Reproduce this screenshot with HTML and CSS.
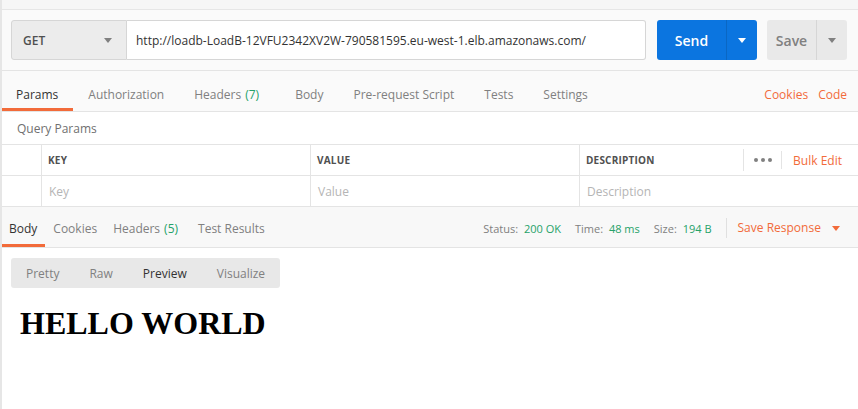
FILE: index.html
```html
<!DOCTYPE html>
<html lang="en">
<head>
    <meta charset="UTF-8">
    <title>Request</title>
    <link rel="stylesheet" href="styles.css">
</head>
<body>
    <div class="app">
        <div class="top-strip"></div>

        <div class="url-row">
            <div class="method">
                <span>GET</span>
                <span class="caret"></span>
            </div>
            <div class="url">http://loadb-LoadB-12VFU2342XV2W-790581595.eu-west-1.elb.amazonaws.com/</div>
            <div class="send">
                <span class="send-label">Send</span>
                <span class="send-drop"><span class="caret white"></span></span>
            </div>
            <div class="save">
                <span class="save-label">Save</span>
                <span class="save-drop"><span class="caret"></span></span>
            </div>
        </div>

        <div class="req-tabs">
            <div class="tab active">Params</div>
            <div class="tab">Authorization</div>
            <div class="tab">Headers <span class="count">(7)</span></div>
            <div class="tab">Body</div>
            <div class="tab">Pre-request Script</div>
            <div class="tab">Tests</div>
            <div class="tab">Settings</div>
            <div class="tab-links">
                <span>Cookies</span>
                <span>Code</span>
            </div>
        </div>

        <div class="query-title">Query Params</div>

        <div class="params">
            <div class="row head">
                <div class="cell check"></div>
                <div class="cell key">KEY</div>
                <div class="cell value">VALUE</div>
                <div class="cell desc">
                    <span>DESCRIPTION</span>
                    <div class="desc-tools">
                        <span class="dots"><i></i><i></i><i></i></span>
                        <span class="bulk">Bulk Edit</span>
                    </div>
                </div>
            </div>
            <div class="row">
                <div class="cell check"></div>
                <div class="cell key placeholder">Key</div>
                <div class="cell value placeholder">Value</div>
                <div class="cell desc placeholder">Description</div>
            </div>
        </div>

        <div class="resp-bar">
            <div class="rtab active">Body</div>
            <div class="rtab">Cookies</div>
            <div class="rtab">Headers <span class="count">(5)</span></div>
            <div class="rtab">Test Results</div>
            <div class="resp-meta">
                <span class="meta">Status: <b>200 OK</b></span>
                <span class="meta">Time: <b>48 ms</b></span>
                <span class="meta">Size: <b>194 B</b></span>
                <span class="save-resp">Save Response <span class="caret orange"></span></span>
            </div>
        </div>

        <div class="resp-body">
            <div class="modes">
                <span>Pretty</span>
                <span>Raw</span>
                <span class="on">Preview</span>
                <span>Visualize</span>
            </div>
            <h1 class="preview">HELLO WORLD</h1>
        </div>
    </div>
</body>
</html>
```

FILE: styles.css
```css
body {
    margin: 0;
    font-family: 'Open Sans', 'Noto Sans', sans-serif;
    background: #fff;
    color: #333;
}
.app {
    border-left: 2px solid #e6e6e6;
    height: 409px;
    box-sizing: border-box;
}
.top-strip {
    height: 9px;
    background: #f6f6f6;
    border-bottom: 1px solid #e6e6e6;
}
.url-row {
    display: flex;
    align-items: center;
    height: 60px;
    padding: 0 11px 0 9px;
    background: #fafafa;
    border-bottom: 1px solid #e4e4e4;
}
.method {
    width: 116px;
    height: 40px;
    box-sizing: border-box;
    display: flex;
    align-items: center;
    justify-content: space-between;
    padding: 0 14px 0 11px;
    background: #ececec;
    border: 1px solid #d6d6d6;
    border-radius: 3px 0 0 3px;
    font-size: 12px;
    font-weight: 600;
    color: #505050;
}
.caret {
    display: inline-block;
    width: 0;
    height: 0;
    border-left: 4px solid transparent;
    border-right: 4px solid transparent;
    border-top: 5px solid #808080;
}
.caret.white { border-top-color: #fff; }
.caret.orange { border-top-color: #f26b3a; margin-left: 8px; vertical-align: middle; }
.url {
    width: 519px;
    height: 40px;
    box-sizing: border-box;
    display: flex;
    align-items: center;
    padding-left: 9px;
    background: #fff;
    border: 1px solid #d6d6d6;
    border-left: none;
    border-radius: 0 3px 3px 0;
    font-size: 12px;
    color: #333;
    white-space: nowrap;
}
.send {
    margin-left: 11px;
    width: 100px;
    height: 40px;
    display: flex;
    background: #0b75e0;
    border-radius: 3px;
    color: #fff;
}
.send-label {
    width: 69px;
    display: flex;
    align-items: center;
    justify-content: center;
    font-size: 14px;
    font-weight: 600;
    border-right: 1px solid #0a67c4;
}
.send-drop, .save-drop {
    flex: 1;
    display: flex;
    align-items: center;
    justify-content: center;
}
.save {
    margin-left: 10px;
    width: 80px;
    height: 40px;
    display: flex;
    background: #e9e9e9;
    border-radius: 3px;
    color: #808080;
}
.save-label {
    width: 49px;
    display: flex;
    align-items: center;
    justify-content: center;
    font-size: 14px;
    font-weight: 600;
    border-right: 1px solid #d6d6d6;
}
.req-tabs {
    display: flex;
    height: 40px;
    background: #fafafa;
    border-bottom: 1px solid #e4e4e4;
    font-size: 12px;
}
.tab {
    display: flex;
    align-items: center;
    padding: 9px 15px 0;
    color: #808080;
    border-bottom: 3px solid transparent;
}
.tab:first-child { padding-left: 14px; }
.tab.active {
    color: #333;
    border-bottom-color: #f26b3a;
}
.count { color: #26a269; margin-left: 4px; margin-right: 4px; }
.tab .count { margin-right: 6px; }
.tab-links {
    margin-left: auto;
    display: flex;
    align-items: center;
    gap: 10px;
    padding: 6px 11px 0 0;
    color: #f26b3a;
}
.query-title {
    height: 32px;
    display: flex;
    align-items: center;
    padding-left: 15px;
    font-size: 12px;
    color: #707070;
    border-bottom: 1px solid #e4e4e4;
}
.row {
    display: flex;
    height: 31px;
    border-bottom: 1px solid #e4e4e4;
    box-sizing: border-box;
}
.cell {
    display: flex;
    align-items: center;
    padding-left: 6px;
    border-right: 1px solid #e4e4e4;
    box-sizing: border-box;
    font-size: 12px;
}
.cell.check { width: 40px; padding: 0; }
.cell.key { width: 269px; }
.cell.value { width: 269px; }
.cell.desc { flex: 1; border-right: none; }
.head .cell {
    font-size: 10px;
    font-weight: 700;
    color: #505050;
    letter-spacing: 0.2px;
}
.placeholder { color: #b5b5b5; padding-left: 7px; }
.desc-tools {
    margin-left: auto;
    display: flex;
    align-items: center;
    height: 22px;
    border-left: 1px solid #e4e4e4;
}
.dots {
    display: flex;
    gap: 3px;
    padding: 0 9px 0 10px;
    border-right: 1px solid #e4e4e4;
    height: 18px;
    align-items: center;
}
.dots i {
    width: 4px;
    height: 4px;
    border-radius: 50%;
    background: #808080;
}
.bulk {
    font-size: 12px;
    font-weight: 400;
    color: #f26b3a;
    padding: 0 16px 0 11px;
    letter-spacing: 0;
}
.resp-bar {
    display: flex;
    height: 41px;
    box-sizing: border-box;
    background: #f8f8f8;
    border-bottom: 1px solid #e4e4e4;
    font-size: 12px;
}
.rtab {
    display: flex;
    align-items: center;
    padding: 5px 8px 0 7px;
    color: #808080;
    border-bottom: 3px solid transparent;
}
.rtab.active {
    color: #333;
    border-bottom-color: #f26b3a;
}
.rtab + .rtab { padding-left: 8px; padding-right: 8px; }
.resp-meta {
    margin-left: auto;
    display: flex;
    align-items: center;
    padding: 2px 18px 0 0;
}
.meta {
    font-size: 11px;
    color: #808080;
    margin-right: 14px;
}
.meta b {
    font-weight: 400;
    color: #26a269;
    margin-left: 3px;
}
.save-resp {
    color: #f26b3a;
    font-size: 12px;
    border-left: 1px solid #e0e0e0;
    padding-left: 11px;
    line-height: 20px;
}
.resp-body {
    padding: 10px 9px;
}
.modes {
    display: inline-flex;
    height: 30px;
    align-items: center;
    background: #e8e8e8;
    border-radius: 3px;
    font-size: 12px;
    color: #808080;
    padding: 0 15px;
}
.modes span { margin-right: 30px; }
.modes span:last-child { margin-right: 0; }
.modes .on { color: #333; }
.preview {
    font-family: 'Liberation Serif', 'Times New Roman', serif;
    font-size: 32px;
    font-weight: 700;
    color: #000;
    margin: 15px 0 0 9px;
    line-height: 40px;
}
```
